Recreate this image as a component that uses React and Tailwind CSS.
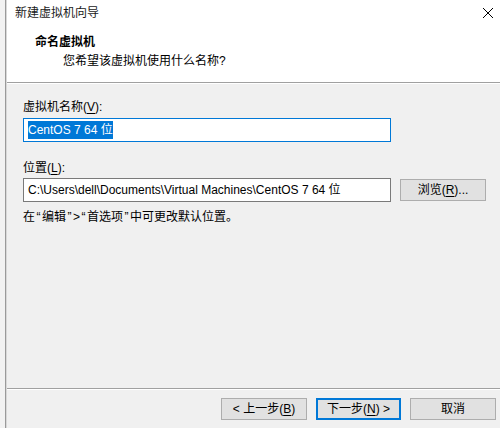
import React from "react"

const font = { fontFamily: '"Liberation Sans", "Noto Sans CJK SC", sans-serif' }

function U({ children }) {
  return <span className="underline underline-offset-2">{children}</span>
}

function Q({ children }) {
  return <span className="px-[1.5px]">{children}</span>
}

function Btn({ children, primary }) {
  return (
    <button
      className={
        primary
          ? "h-[22px] w-[85px] border-2 border-[#0078d7] bg-[#e1e1e1] text-[12px] leading-none text-black"
          : "h-[22px] w-[86px] border border-[#adadad] bg-[#e1e1e1] text-[12px] leading-none text-black"
      }
    >
      {children}
    </button>
  )
}

export default function App() {
  return (
    <div className="flex h-[428px] w-[500px] overflow-hidden bg-[#f0f0f0] text-[12px] text-black" style={font}>
      <div className="w-[5px] bg-[#f2f2f2]" />
      <div className="w-[1px] bg-[#9a9a9a]" />
      <div className="w-[1px] bg-[#d8d8d8]" />

      <div className="flex min-w-0 flex-1 flex-col">
        {/* title bar */}
        <div className="flex h-[25px] items-center justify-between bg-white pl-[8px] pr-[6px]">
          <span className="leading-4 text-[#1a1a1a]">新建虚拟机向导</span>
          <svg width="12" height="12" viewBox="0 0 12 12" className="text-black">
            <path d="M1 1 L11 11 M11 1 L1 11" stroke="currentColor" strokeWidth="1" fill="none" />
          </svg>
        </div>

        {/* header */}
        <div className="flex h-[57px] flex-col bg-white pt-[9px]">
          <div className="pl-[28px] font-bold leading-4">命名虚拟机</div>
          <div className="mt-[3px] pl-[56px] leading-4">您希望该虚拟机使用什么名称?</div>
        </div>
        <div className="h-[1px] bg-[#a0a0a0]" />
        <div className="h-[1px] bg-white" />

        {/* body */}
        <div className="flex flex-1 flex-col pl-[16px] pt-[15px]">
          <div className="leading-4">
            虚拟机名称(<U>V</U>):
          </div>
          <div className="mt-[3px] flex h-[24px] w-[368px] items-center border border-[#0078d7] bg-white pl-[4px]">
            <span className="bg-[#0078d7] leading-[18px] text-white">CentOS 7 64 位</span>
          </div>

          <div className="mt-[18px] leading-4">
            位置(<U>L</U>):
          </div>
          <div className="mt-[2px] flex items-center gap-[9px]">
            <div className="flex h-[24px] w-[368px] items-center border border-[#7a7a7a] bg-white pl-[4px]">
              <span className="whitespace-nowrap">C:\Users\dell\Documents\Virtual Machines\CentOS 7 64 位</span>
            </div>
            <Btn>
              浏览(<U>R</U>)...
            </Btn>
          </div>

          <div className="mt-[7px] leading-4">
            在<Q>“</Q>编辑<Q>”</Q>&gt;<Q>“</Q>首选项<Q>”</Q>中可更改默认位置。
          </div>
        </div>

        {/* footer */}
        <div className="h-[1px] bg-[#a0a0a0]" />
        <div className="h-[1px] bg-white" />
        <div className="flex h-[38px] items-start justify-end gap-[9px] pr-[4px] pt-[8px]">
          <Btn>
            &lt; 上一步(<U>B</U>)
          </Btn>
          <Btn primary>
            下一步(<U>N</U>) &gt;
          </Btn>
          <Btn>取消</Btn>
        </div>
      </div>
    </div>
  )
}
